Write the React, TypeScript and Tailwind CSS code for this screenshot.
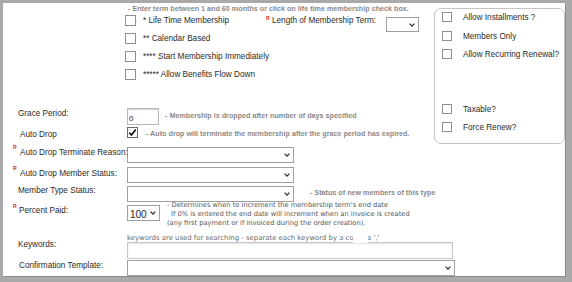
import React from 'react';

const LABEL = 'text-[8.2px] leading-[10px] text-[#2a2a2a] whitespace-nowrap';
const NOTE = 'text-[7.2px] font-bold leading-[9px] text-[#8a8a8a] whitespace-nowrap';
const TAHOMA = "font-['DejaVu_Sans',Verdana,sans-serif] text-[6.7px] whitespace-nowrap";

const Chevron = (): React.JSX.Element => (
  <svg width="6" height="4" viewBox="0 0 6 4" aria-hidden="true">
    <path d="M0.6 0.6 L3 3.1 L5.4 0.6" fill="none" stroke="#333" strokeWidth="1.3" />
  </svg>
);

const Box = ({ small }: { small?: boolean }): React.JSX.Element => (
  <div
    className={
      'shrink-0 border border-[#8f8f8f] bg-white ' + (small ? 'h-[10px] w-[10px]' : 'h-[11px] w-[11px]')
    }
  />
);

const CheckedBox = (): React.JSX.Element => (
  <div className="flex h-[11px] w-[11px] shrink-0 items-center justify-center border border-[#6a6a6a] bg-white">
    <svg width="9" height="9" viewBox="0 0 9 9" aria-hidden="true">
      <path d="M1.3 4.6 L3.5 7 L7.8 1.4" fill="none" stroke="#111" strokeWidth="1.7" />
    </svg>
  </div>
);

// fake select: bordered box with the chevron pinned right
const Select = ({
  className,
  children,
}: {
  className: string;
  children?: React.ReactNode;
}): React.JSX.Element => (
  <div
    className={
      'flex shrink-0 items-center justify-between border border-[#a0a0a0] bg-white pl-[2px] pr-[3px] ' +
      className
    }
  >
    <span>{children}</span>
    <Chevron />
  </div>
);

const Req = ({ top }: { top: string }): React.JSX.Element => (
  <span
    className={
      'absolute left-[10px] text-[5px] font-bold leading-[5px] text-[#e0262c] ' + top
    }
  >
    R
  </span>
);

const TOP_CHECKS = [
  '** Calendar Based',
  '**** Start Membership Immediately',
  '***** Allow Benefits Flow Down',
];

const SIDE_TOP = ['Allow Installments ?', 'Members Only', 'Allow Recurring Renewal?'];

export default function App(): React.JSX.Element {
  return (
    <div className="h-[282px] w-[572px] bg-[#a9a9a9] pl-[3px] pr-[7px] pt-[3px] pb-[6px] font-['Liberation_Sans',Arial,sans-serif]">
      <div className="h-[273px] w-[562px] bg-white shadow-[1px_1px_0_#8a8a8a]">
        {/* top part: membership term checks + side option box */}
        <div className="flex">
          <div className="w-[431px] pt-[1px]">
            <p className={'h-[9px] pl-[125px] ' + NOTE}>
              - Enter term between 1 and 60 months or click on life time membership check box.
            </p>
            <div className="mt-[2px] pl-[122px]">
              <div className="flex h-[18px] items-start">
                <Box />
                <span className={'ml-[7px] mt-[1px] w-[123px] ' + LABEL}>* Life Time Membership</span>
                <span className="mt-[1px] w-[6px] text-[5px] font-bold leading-[5px] text-[#e0262c]">R</span>
                <span className={'mt-[1px] w-[114px] ' + LABEL}>Length of Membership Term:</span>
                <Select className="mt-[2px] h-[15px] w-[33px] border-[#8c8c8c]" />
              </div>
              {TOP_CHECKS.map((t) => (
                <div key={t} className="flex h-[18px] items-start">
                  <Box />
                  <span className={'ml-[7px] mt-[1px] ' + LABEL}>{t}</span>
                </div>
              ))}
            </div>

            <div className="mt-[21px] flex h-[17px] items-start">
              <div className={'mt-[1px] w-[124px] pl-[15px] ' + LABEL}>Grace Period:</div>
              <div className="h-[17px] w-[32px] shrink-0 border border-[#b8b8b8] pl-[1px] pt-[6px] text-[8px] leading-[8px] text-[#222] shadow-[inset_0_1px_1px_rgba(0,0,0,0.18)]">
                0
              </div>
              <span className={'ml-[6px] mt-[3px] ' + NOTE}>
                - Membership is dropped after number of days specified
              </span>
            </div>

            <div className="mt-[2px] flex items-start">
              <div className={'mt-[3px] w-[124px] pl-[17px] ' + LABEL}>Auto Drop</div>
              <CheckedBox />
              <span className={'ml-[8px] mt-[2px] ' + NOTE}>
                - Auto drop will terminate the membership after the grace period has expired.
              </span>
            </div>
          </div>

          <div className="mt-[5px] h-[136px] w-[131px] rounded-[7px] border border-[#c4c4c4] pl-[7px] pt-[3px]">
            {SIDE_TOP.map((t, i) => (
              <div key={t} className={'flex items-start ' + (i === 0 ? 'h-[19px]' : 'h-[18px]')}>
                <Box small />
                <span className={'ml-[11px] mt-[1px] ' + LABEL}>{t}</span>
              </div>
            ))}
            <div className="mt-[37px] flex h-[18px] items-start">
              <Box small />
              <span className={'ml-[11px] mt-[1px] ' + LABEL}>Taxable?</span>
            </div>
            <div className="flex h-[18px] items-start">
              <Box small />
              <span className={'ml-[11px] mt-[1px] ' + LABEL}>Force Renew?</span>
            </div>
          </div>
        </div>

        {/* lower form rows */}
        <div className="mt-[3px] flex items-start">
          <div className={'relative mt-[1px] w-[124px] pl-[17px] ' + LABEL}>
            <Req top="-top-[3px]" />
            Auto Drop Terminate Reason:
          </div>
          <Select className="h-[16px] w-[167px]" />
        </div>

        <div className="mt-[4px] flex items-start">
          <div className={'relative mt-[2px] w-[124px] pl-[17px] ' + LABEL}>
            <Req top="-top-[3px]" />
            Auto Drop Member Status:
          </div>
          <Select className="h-[16px] w-[167px]" />
        </div>

        <div className="mt-[3px] flex items-start">
          <div className={'w-[124px] pl-[15px] ' + LABEL}>Member Type Status:</div>
          <Select className="h-[16px] w-[167px]" />
          <span className={'ml-[16px] mt-[2px] ' + NOTE}>- Status of new members of this type</span>
        </div>

        <div className="mt-[3px] flex items-start">
          <div className={'relative mt-[1px] w-[124px] pl-[16px] ' + LABEL}>
            <Req top="-top-[2px]" />
            Percent Paid:
          </div>
          <Select className="h-[16px] w-[33px] border-[#858585]">
            <span className="text-[10px] leading-[10px] text-[#222]">100</span>
          </Select>
          <div className={'-mt-[4px] ml-[7px] leading-[9px] text-[#555] ' + TAHOMA}>
            <p>- Determines when to increment the membership term&apos;s end date</p>
            <p className="pl-[4px]">If 0% is entered the end date will increment when an invoice is created</p>
            <p>(any first payment or if invoiced during the order creation).</p>
          </div>
        </div>

        <div className="mt-[6px] flex items-start">
          <div className={'mt-[6px] w-[124px] pl-[15px] ' + LABEL}>Keywords:</div>
          <div>
            <p className={'h-[8px] text-[6.9px] leading-[8px] text-[#6a6a6a] ' + TAHOMA}>
              keywords are used for searching - separate each keyword by a co
              <span className="relative">
                mm
                <span className="absolute -inset-[1px] bg-white" />
              </span>
              a &apos;,&apos;
            </p>
            <div className="h-[17px] w-[326px] border border-[#c6c6c6] shadow-[inset_0_1px_2px_rgba(0,0,0,0.12)]" />
          </div>
        </div>

        <div className="mt-[1px] flex items-start">
          <div className={'mt-[1px] w-[124px] pl-[16px] ' + LABEL}>Confirmation Template:</div>
          <Select className="h-[16px] w-[328px]" />
        </div>
      </div>
    </div>
  );
}
